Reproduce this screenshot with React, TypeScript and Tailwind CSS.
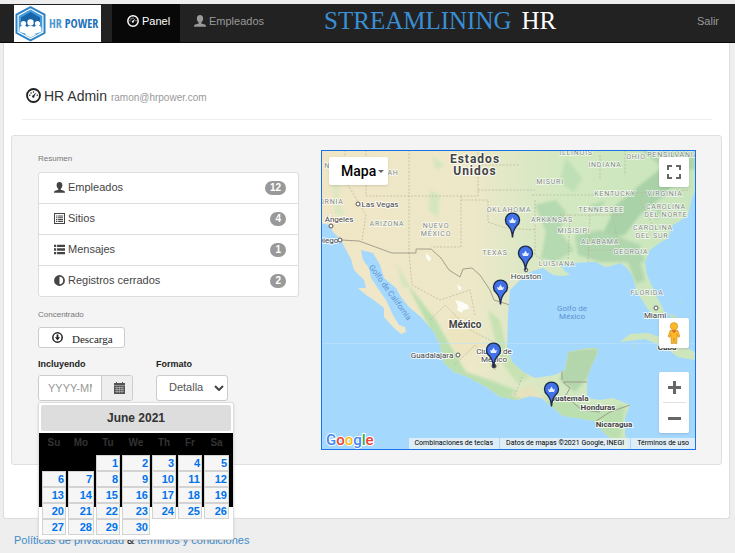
import React from "react";

const SANS = "font-['Liberation_Sans',Arial,sans-serif]";

function DashboardIcon({ className }: { className: string }) {
  return (
    <svg viewBox="0 0 16 16" className={className} aria-hidden="true">
      <circle cx="8" cy="8" r="6.9" fill="none" stroke="currentColor" strokeWidth="2" />
      <g fill="currentColor">
        <circle cx="4" cy="7.800" r="0.8" />
        <circle cx="5.4" cy="5.2" r="0.8" />
        <circle cx="8" cy="4.2" r="0.8" />
        <circle cx="12" cy="7.800" r="0.8" />
        <path d="M11.200 4.600 9 8.600a1.300 1.300 0 1 1-1.400-.8z" />
      </g>
    </svg>
  );
}

function UserIcon({ className }: { className: string }) {
  return (
    <svg viewBox="0 0 16 16" className={className} fill="currentColor" aria-hidden="true">
      <path d="M8 0C5.400 0 3.800 1.800 3.800 4.600c0 2.200 1 4.300 2.400 5.200v1.400L1.600 12.800C.5 13.200 0 14 0 15.600h16c0-1.600-.5-2.400-1.600-2.800L9.800 11.200V9.800c1.400-.9 2.400-3 2.400-5.200C12.200 1.800 10.600 0 8 0z" />
    </svg>
  );
}

function ListAltIcon({ className }: { className: string }) {
  return (
    <svg viewBox="0 0 16 16" className={className} fill="currentColor" aria-hidden="true">
      <path fillRule="evenodd" d="M0 0h16v16H0zM1.500 1.500v13h13v-13z" />
      <path d="M3 3.500h2V5H3zM6 3.500h7V5H6zM3 6.200h2v1.500H3zM6 6.200h7v1.500H6zM3 8.900h2v1.500H3zM6 8.900h7v1.500H6zM3 11.500h2V13H3zM6 11.500h7V13H6z" />
    </svg>
  );
}

function ListIcon({ className }: { className: string }) {
  return (
    <svg viewBox="0 0 16 16" className={className} fill="currentColor" aria-hidden="true">
      <path d="M0 1h3.200v3.500H0zM4.500 1H16v3.500H4.500zM0 6.200h3.200v3.500H0zM4.500 6.200H16v3.500H4.500zM0 11.500h3.200V15H0zM4.500 11.500H16V15H4.500z" />
    </svg>
  );
}

function ContrastIcon({ className }: { className: string }) {
  return (
    <svg viewBox="0 0 16 16" className={className} aria-hidden="true">
      <circle cx="8" cy="8" r="6.600" fill="none" stroke="currentColor" strokeWidth="2.600" />
      <path d="M8 2a6 6 0 0 0 0 12z" fill="currentColor" />
    </svg>
  );
}

function DownloadIcon() {
  return (
    <svg viewBox="0 0 16 16" className="size-[11px]" aria-hidden="true">
      <circle cx="8" cy="8" r="6.800" fill="none" stroke="currentColor" strokeWidth="2.200" />
      <path d="M6.700 3.800h2.600v3.800h2.400L8 12.200 4.300 7.600h2.400z" fill="currentColor" />
    </svg>
  );
}

function CalendarIcon() {
  return (
    <svg viewBox="0 0 11 12" className="h-[12px] w-[11px]" aria-hidden="true">
      <path d="M0 1h2V0h1v1h5V0h1v1h2v11H0z" fill="#555" />
      <path
        d="M0 3.500h11M1 5.500h9M1 7.500h9M1 9.500h9M3 4.500v6.500M5.500 4.500v6.500M8 4.500v6.500"
        stroke="#ccc"
        strokeWidth="0.500"
      />
    </svg>
  );
}

function Logo() {
  return (
    <svg viewBox="0 0 87 37" className="h-[37px] w-[87px] bg-white" role="img" aria-label="HR Power">
      <path d="M16.500 1 31.500 9v19.500L16.500 36.500 1.500 28.500V9z" fill="#2d82c4" />
      <path d="M16.500 3.300 29.500 10.200v17.200L16.500 34.300 3.500 27.400V10.200z" fill="#fff" />
      <path d="M16.500 4.500 28.300 11v15.700L16.500 33 4.700 26.700V11z" fill="#3f9bdc" />
      <path d="M16.500 7 26 12.500V22H7v-9.500z" fill="#1a65a8" />
      <g fill="#fff">
        <circle cx="9.500" cy="18.500" r="2.600" />
        <circle cx="23.500" cy="18.500" r="2.600" />
        <path d="M5.500 27v-3c0-2.500 2-3.500 4-3.500s4 1 4 3.500v5zM27.500 27v-3c0-2.500-2-3.500-4-3.500s-4 1-4 3.500v5z" />
        <circle cx="16.500" cy="17.500" r="3.200" />
        <path d="M11.500 30v-5c0-3 2-4 5-4s5 1 5 4v5l-5 2.500z" />
      </g>
      <text
        x="35"
        y="23"
        fontSize="12"
        fontWeight="700"
        fontFamily="'Liberation Sans Narrow', 'Open Sans Condensed', Roboto, sans-serif"
        fill="#1f71b8"
      >
        <tspan fill="#4b97cf">HR</tspan> POWER
      </text>
    </svg>
  );
}

function NavBar() {
  return (
    <nav className="flex h-[39px] items-stretch border-b border-[#080808] bg-[#222] text-[11px] text-[#999]">
      <a href="#inicio" className="ml-[14px] mt-px shrink-0">
        <Logo />
      </a>
      <a href="#panel" className="ml-[11px] flex w-[68px] shrink-0 items-center gap-[3px] bg-[#080808] pb-1 pl-[15px] text-white">
        <DashboardIcon className="size-[12px]" />
        Panel
      </a>
      <a href="#empleados" className="flex shrink-0 items-center gap-[3px] px-[14px] pb-1">
        <UserIcon className="size-[12px]" />
        Empleados
      </a>
      <h1 className="ml-[46px] flex items-center gap-[10px] whitespace-nowrap pb-1 font-['Liberation_Serif',serif] text-[25px] text-white">
        <span className="text-[#3a8fd4]">STREAMLINING</span>
        <span>HR</span>
      </h1>
      <a href="#salir" className="ml-auto flex items-center pb-1 pr-4">
        Salir
      </a>
    </nav>
  );
}

const SUMMARY = [
  { label: "Empleados", count: 12, Icon: UserIcon },
  { label: "Sitios", count: 4, Icon: ListAltIcon },
  { label: "Mensajes", count: 1, Icon: ListIcon },
  { label: "Registros cerrados", count: 2, Icon: ContrastIcon },
];

function SummaryList() {
  return (
    <ul className="mt-[7px] divide-y divide-[#ddd] rounded-[3px] border border-[#ddd] bg-white text-[11px] text-[#444]">
      {SUMMARY.map(({ label, count, Icon }) => (
        <li key={label}>
          <a href="#resumen" className="flex h-[30px] items-center pb-0.5 pl-[15px] pr-3">
            <Icon className="size-[11px]" />
            <span className="ml-[3px]">{label}</span>
            <span className="ml-auto mt-0.5 h-[14px] rounded-full bg-[#999] px-[5px] text-[10px] font-bold leading-[14px] text-white">
              {count}
            </span>
          </a>
        </li>
      ))}
    </ul>
  );
}

const WEEKDAYS = ["Su", "Mo", "Tu", "We", "Th", "Fr", "Sa"];
const WEEKS: (number | null)[][] = [
  [null, null, 1, 2, 3, 4, 5],
  [6, 7, 8, 9, 10, 11, 12],
  [13, 14, 15, 16, 17, 18, 19],
  [20, 21, 22, 23, 24, 25, 26],
  [27, 28, 29, 30, null, null, null],
];

function DatePicker() {
  return (
    <div className="absolute left-0 top-full z-10 mt-px h-[138px] w-[196px] rounded-[2px] border border-[#ddd] bg-white pt-0.5 shadow-sm">
      <div className="mx-0.5 mb-0.5 flex h-[26px] items-center justify-center rounded-[2px] bg-[#ddd] text-[12px] font-bold text-[#333]">
        June 2021
      </div>
      <div className="h-[74px] bg-black px-px">
        <table className="table-fixed border-separate border-spacing-x-0.5 border-spacing-y-0 text-[11px] font-bold">
          <colgroup>
            <col className="w-[24px]" />
            <col className="w-[26px]" />
            <col className="w-[24px]" />
            <col className="w-[28px]" />
            <col className="w-[24px]" />
            <col className="w-[24px]" />
            <col className="w-[25px]" />
          </colgroup>
          <thead>
            <tr>
              {WEEKDAYS.map((day) => (
                <th key={day} className="h-[22px] p-0 pb-0.5 text-[10px] leading-4 text-[#333]">
                  {day}
                </th>
              ))}
            </tr>
          </thead>
          <tbody>
            {WEEKS.map((week, w) => (
              <tr key={w}>
                {week.map((day, d) => (
                  <td key={d} className="h-4 p-0">
                    {day !== null && (
                      <button
                        type="button"
                        className="block h-4 w-full border border-[#d3d3d3] bg-[#f6f6f6] pr-px text-right leading-[14px] text-[#0073ea]"
                      >
                        {day}
                      </button>
                    )}
                  </td>
                ))}
              </tr>
            ))}
          </tbody>
        </table>
      </div>
    </div>
  );
}

function SidePanel() {
  return (
    <section className="w-[261px] shrink-0 pt-[3px]">
      <p className="text-[8px] leading-3 text-[#777]">Resumen</p>
      <SummaryList />
      <p className="mt-3 text-[8px] leading-3 text-[#777]">Concentrado</p>
      <button
        type="button"
        className="mt-1.5 flex h-[21px] w-[87px] items-center gap-[9px] rounded-[3px] border border-[#ccc] bg-white pl-[13px] text-[#222]"
      >
        <DownloadIcon />
        <span className="pt-0.5 font-['Liberation_Serif',serif] text-[11px] leading-4">Descarga</span>
      </button>
      <div className="mt-[10px] flex">
        <div className="relative w-[118px]">
          <label htmlFor="month" className="block text-[9px] font-bold leading-3 text-[#222]">
            Incluyendo
          </label>
          <div className="mt-[5px] flex h-[26px] w-[95px] overflow-hidden rounded-[3px] border border-[#ccc]">
            <input
              id="month"
              type="text"
              placeholder="YYYY-MM"
              className="w-[62px] bg-white px-[9px] text-[11px] text-[#555] outline-none placeholder:text-[#999]"
            />
            <button
              type="button"
              aria-label="Abrir calendario"
              className="flex flex-1 items-center justify-center border-l border-[#ccc] bg-[#eee] pl-1"
            >
              <CalendarIcon />
            </button>
          </div>
          <DatePicker />
        </div>
        <div>
          <label htmlFor="format" className="block text-[9px] font-bold leading-3 text-[#222]">
            Formato
          </label>
          <div className="relative mt-[5px] w-[72px]">
            <select
              id="format"
              className="block h-[26px] w-full appearance-none rounded-[3px] border border-[#ccc] bg-white pb-0.5 pl-3 text-[11px] text-[#555]"
            >
              <option>Detalla</option>
            </select>
            <svg viewBox="0 0 10 6" className="pointer-events-none absolute right-1 top-[10px] h-[6px] w-[10px]" aria-hidden="true">
              <path d="M1 1l4 4 4-4" fill="none" stroke="#444" strokeWidth="2" />
            </svg>
          </div>
        </div>
      </div>
    </section>
  );
}

const STATES: [string, number, number][] = [
  ["ILLINOIS", 576, 155],
  ["OHIO", 636, 159],
  ["PENSILVANIA", 673, 157],
  ["INDIANA", 605, 167],
  ["MISURI", 550, 184],
  ["KENTUCKY", 615, 196],
  ["VIRGINIA", 665, 196],
  ["TENNESSEE", 601, 212],
  ["CAROLINA", 666, 209],
  ["DEL NORTE", 666, 217],
  ["OKLAHOMA", 509, 212],
  ["ARKANSAS", 552, 222],
  ["MISISIPI", 574, 233],
  ["CAROLINA", 653, 230],
  ["DEL SUR", 652, 238],
  ["ALABAMA", 600, 244],
  ["GEORGIA", 631, 254],
  ["LUISIANA", 557, 266],
  ["TEXAS", 495, 255],
  ["FLORIDA", 647, 295],
  ["ARIZONA", 387, 226],
  ["NUEVO", 436, 228],
  ["MÉXICO", 436, 236],
  ["UTAH", 388, 175],
  ["CALIFORNIA", 320, 204],
  ["NEVADA", 340, 168],
];

const PINS = [
  [512, 236],
  [525, 269],
  [500, 303],
  [493, 366],
  [551, 405],
];

const MAINLAND =
  "M321 150H696V190L692 198L688 215L680 221L673 225L668 238L658 244L650 250L645 262L647 275L657 297L665 312L660 320L654 316L647 308L637 292L632 275L626 267L620 263L612 266L605 267L596 262L590 262L575 263L560 265L565 271L570 275L561 276L553 275L543 268L530 272L520 280L510 290L508 315L507 348L512 362L523 372L535 378L555 375L565 370L568 352L587 348L598 348L597 355L592 365L588 375L587 388L587 398L600 400L613 398L630 405L625 418L625 433L628 450H617L613 440L603 432L594 421L577 418L563 416L552 407L542 398L530 396L517 400L500 397L488 388L468 377L454 372L444 363L440 345L434 332L421 317L409 307L401 297L396 288L384 278L380 265L373 253L361 250L363 260L369 268L371 278L379 290L386 300L393 315L399 325L405 327L406 332L401 334L393 327L384 317L384 308L371 298L366 295L358 288L366 288L364 280L354 270L351 259L345 248L341 240L333 232L329 225L321 223Z";

function MapCanvas() {
  return (
    <svg viewBox="322 151 373 298" preserveAspectRatio="xMidYMid slice" className="block h-full w-full" role="img" aria-label="Mapa de sitios">
      <defs>
        <linearGradient id="terrain" x1="0" x2="1" y1="0" y2="0">
          <stop offset="0" stopColor="#f0e6c6" />
          <stop offset="0.400" stopColor="#ede8c8" />
          <stop offset="0.520" stopColor="#dfe8c6" />
          <stop offset="0.650" stopColor="#d2e8c0" />
          <stop offset="1" stopColor="#c9e5bd" />
        </linearGradient>
        <clipPath id="land">
          <path d={MAINLAND} />
        </clipPath>
        <filter id="soft" x="-20%" y="-20%" width="140%" height="140%">
          <feGaussianBlur stdDeviation="1.800" />
        </filter>
      </defs>
      <rect x="321" y="150" width="375" height="300" fill="#a5d8fd" />
      <path d={MAINLAND} fill="url(#terrain)" />
      <g clipPath="url(#land)">
        <g filter="url(#soft)">
          <path d="M600 240L616 205L640 185L672 160L680 175L665 195L640 215L625 235Z" fill="#a9d2a9" />
          <path d="M535 205L556 200L566 212L560 232L574 250L555 262L541 258L546 232Z" fill="#b5d9b0" />
          <path d="M575 235L600 230L640 245L645 262L600 262L578 255Z" fill="#b0d6ad" />
          <path d="M628 262L640 262L645 280L636 284Z" fill="#b0d6ad" />
          <path d="M566 158L582 178L574 192L560 182Z" fill="#bfdfb6" />
          <path d="M640 150L696 150L696 170L660 165Z" fill="#b0d6ad" />
          <path d="M568 350L600 348L590 375L575 392L560 380Z" fill="#b3d6ac" />
          <path d="M405 280L420 300L436 320L450 345L466 372L490 380L520 392L552 398L600 408L625 405L620 440L560 425L500 405L440 370L428 325Z" fill="#bbdfae" />
          <path d="M488 310L500 320L508 355L530 376L518 384L500 360Z" fill="#c8e2b2" />
          <path d="M452 312L478 322L484 350L462 356L446 336Z" fill="#ece5c0" />
          <path d="M430 190L440 195L438 218L428 210ZM375 165L385 160L382 180ZM432 156L445 165L436 170Z" fill="#d5e6bd" />
          <path d="M330 155L342 170L338 200L345 215L335 215Z" fill="#dbe8c2" />
          <path d="M396 262L412 290L402 286Z" fill="#d5e6bd" />
          <path d="M510 395L530 385L548 402L540 405Z" fill="#e6e2bd" />
          <path d="M590 205L606 200L598 214ZM652 210L664 206L656 222Z" fill="#b5d9b0" />
        </g>
        <g fill="#fff" opacity="0.850">
          <path d="M426 253l5 5-1 4-4-4zM457 284l5 4-3 3zM455 300l7 2 6 3 1 4-6 1-1 3-5-3 1-4z" />
        </g>
        <g fill="none" stroke="#b9b49b" strokeWidth="0.700" strokeDasharray="2 1.500">
          <path d="M366 150V196H478V150M409 150V253M461 196V247H431M461 200H488V222L506 228L535 230M478 165H520M478 190H535M345 150V180L366 215L362 240M532 195H600L690 190M560 215H625M570 215L568 262M590 215L588 262M612 215L620 250M535 200V255L545 262M600 155V180M625 150V175M588 250H620M640 200L655 230M409 253L412 285L440 300L470 290L475 315M430 320L445 305L470 330L500 345M455 365L475 345L495 370L505 350M515 395L523 375" />
        </g>
        <path
          d="M341 240L359 241L392 253H416V249H431L441 258L449 270L460 277L463 269L472 268L480 275L490 290L494 300L510 305M563 382H587M562 380V370M563 382L570 388L566 395L556 400M570 400L582 410L600 412M596 421L610 412L630 405"
          fill="none"
          stroke="#9a9686"
          strokeWidth="0.900"
        />
      </g>
      <path d="M620 342L630 334L648 333L665 339L680 345L695 352L695 360L678 357L664 347L645 339L628 341Z" fill="#cfe6bd" />
      <path d="M632 345l5 1-2 1.500zM668 313l8 3 4 8-6-3zM680 300l3 8-2-8z" fill="#bfe0c0" />
      <path d="M321 343.500H696" stroke="#c0e3fd" strokeWidth="0.600" />

      <g fontFamily="Roboto, sans-serif" textAnchor="middle" stroke="#fff" strokeOpacity="0.800" style={{ paintOrder: "stroke" }}>
        <g fontSize="7" fill="#7f8a82" strokeWidth="1.500" letterSpacing="0.800">
          {STATES.map(([name, x, y]) => (
            <text key={`${name}-${x}`} x={x} y={y}>
              {name}
            </text>
          ))}
        </g>
        <g fontSize="12" fontWeight="700" fill="#444" strokeWidth="2" letterSpacing="1">
          <text x="475" y="163">Estados</text>
          <text x="475" y="175">Unidos</text>
        </g>
        <g fontSize="8" fill="#444" strokeWidth="2">
          <text x="380" y="207">Las Vegas</text>
          <text x="339" y="222">Ángeles</text>
          <text x="328" y="243">Diego</text>
          <text x="526" y="279">Houston</text>
          <text x="655" y="318">Miami</text>
          <text x="432" y="358">Guadalajara</text>
          <text x="494" y="354">Ciudad de</text>
          <text x="494" y="362">México</text>
        </g>
        <g fontSize="8" fontWeight="700" fill="#444" strokeWidth="2">
          <text x="465" y="328" fontSize="10">México</text>
          <text x="569" y="401">Guatemala</text>
          <text x="598" y="410">Honduras</text>
          <text x="614" y="427">Nicaragua</text>
          <text x="667" y="350">Cuba</text>
        </g>
        <g fontSize="8" fill="#5c93d2" stroke="none">
          <text x="572" y="311">Golfo de</text>
          <text x="572" y="319">México</text>
          <text transform="translate(388 294) rotate(54)">Golfo de California</text>
        </g>
      </g>
      <g fill="#fff" stroke="#555" strokeWidth="1">
        <circle cx="358" cy="204" r="2" />
        <circle cx="331" cy="226" r="2" />
        <circle cx="340" cy="240" r="2" />
        <circle cx="526" cy="270" r="1.800" />
        <circle cx="656" cy="308" r="2" />
        <circle cx="458" cy="355" r="2" />
        <circle cx="494" cy="366" r="2" fill="#333" />
      </g>
      {PINS.map(([x, y]) => (
        <g key={x} transform={`translate(${x} ${y})`}>
          <path
            d="M.5 1.500C.2-5-1-7.500-4-10.500A7 7 0 1 1 5-10.500C2-7.500.8-5 .5 1.500z"
            fill="#4272e8"
            stroke="#1c2a4c"
            strokeWidth="1.400"
          />
          <path d="M-3-16l1.800.6L.5-18.500l1.700 3.100L4-16l-1 3H-2z" fill="#e5edff" />
        </g>
      ))}
      <text x="326" y="445" fontSize="15" fontWeight="500" fontFamily="Roboto, sans-serif" stroke="#fff" strokeWidth="2" style={{ paintOrder: "stroke" }}>
        <tspan fill="#4285f4">G</tspan>
        <tspan fill="#ea4335">o</tspan>
        <tspan fill="#fbbc05">o</tspan>
        <tspan fill="#4285f4">g</tspan>
        <tspan fill="#34a853">l</tspan>
        <tspan fill="#ea4335">e</tspan>
      </text>
    </svg>
  );
}

function MapPanel() {
  return (
    <section className="relative h-[300px] min-w-0 flex-1 overflow-hidden border border-[#1a73e8] font-[Roboto,sans-serif]">
      <MapCanvas />
      <button type="button" className="absolute left-[7px] top-[6px] flex h-[28px] w-[59px] items-center gap-0.5 rounded-[2px] bg-white pl-[12px] text-[14px] font-medium text-black shadow">
        Mapa
        <span className="border-x-[3px] border-t-[3px] border-x-transparent border-t-[#666]" />
      </button>
      <button type="button" aria-label="Pantalla completa" className="absolute right-[6px] top-[6px] flex size-[30px] items-center justify-center rounded-[2px] bg-white shadow">
        <svg viewBox="0 0 14 14" className="size-[14px]" aria-hidden="true">
          <path d="M1 5V1h4M9 1h4v4M13 9v4H9M5 13H1V9" fill="none" stroke="#666" strokeWidth="2" />
        </svg>
      </button>
      <button type="button" aria-label="Street View" className="absolute right-[6px] top-[167px] flex size-[30px] items-center justify-center rounded-[2px] bg-white shadow">
        <svg viewBox="0 0 14 22" className="h-[22px] w-[14px]" aria-hidden="true">
          <g fill="#fbb829" stroke="#c98a1b" strokeWidth="0.600">
            <path d="M3 8.500h8l1.800 6-1.600.8-1-2.800-.4 9H7.500L7 16l-.5 5.500H4.200l-.4-9-1 2.800-1.600-.8z" />
            <circle cx="7" cy="4.300" r="3.700" />
          </g>
          <path d="M4.500 8.500h5L7 11z" fill="#e0592a" />
        </svg>
      </button>
      <div className="absolute right-[6px] top-[221px] flex h-[61px] w-[30px] flex-col items-center rounded-[2px] bg-white shadow">
        <button type="button" aria-label="Acercar" className="flex w-full flex-1 items-center justify-center">
          <svg viewBox="0 0 13 13" className="size-[13px]" aria-hidden="true">
            <path d="M0 6.500h13M6.500 0v13" stroke="#666" strokeWidth="3" />
          </svg>
        </button>
        <span className="h-px w-[23px] bg-[#e0e0e0]" />
        <button type="button" aria-label="Alejar" className="flex w-full flex-1 items-center justify-center">
          <svg viewBox="0 0 13 3" className="h-[3px] w-[13px]" aria-hidden="true">
            <path d="M0 1.500h13" stroke="#666" strokeWidth="3" />
          </svg>
        </button>
      </div>
      <div className="absolute bottom-0 right-0 flex h-[11px] items-center gap-px whitespace-nowrap text-[7px] leading-[11px] text-black">
        <button type="button" className="bg-[#eef4f4]/80 px-1.5">Combinaciones de teclas</button>
        <span className="bg-[#eef4f4]/80 px-1.5">Datos de mapas ©2021 Google, INEGI</span>
        <a href="#terminos" className="bg-[#eef4f4]/80 px-1.5">Términos de uso</a>
      </div>
    </section>
  );
}

export default function App() {
  return (
    <div className={`${SANS} min-h-screen bg-[#eee] pt-1`}>
      <NavBar />
      <main className="ml-[3px] mr-[5px] rounded-b-[3px] border-x border-b border-[#ddd] bg-white px-[7px] pb-[53px]">
        <header className="ml-[11px] mr-[10px] flex h-[77px] items-end border-b border-[#eee] pb-3 pl-1">
          <DashboardIcon className="mb-1 size-[15px] text-[#222]" />
          <h2 className="ml-[3px] text-[14px] leading-[18px] text-[#333]">
            HR Admin <small className="text-[10px] text-[#999]">ramon@hrpower.com</small>
          </h2>
        </header>
        <div className="mt-[15px] flex gap-[22px] rounded-[3px] border border-[#e0e0e0] bg-[#f4f4f4] py-[14px] pl-[26px] pr-[25px]">
          <SidePanel />
          <MapPanel />
        </div>
      </main>
      <footer className="ml-[14px] pt-[14px] text-[11px] leading-[14px] text-[#222]">
        <a href="#privacidad" className="text-[#428bca]">Políticas de privacidad</a> &amp;{" "}
        <a href="#condiciones" className="text-[#428bca]">términos y condiciones</a>
      </footer>
    </div>
  );
}
